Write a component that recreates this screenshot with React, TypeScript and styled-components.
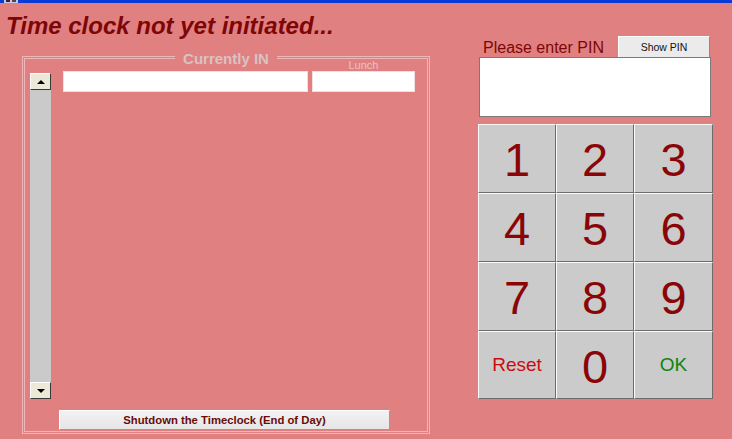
import React from "react";
import styled, { createGlobalStyle } from "styled-components";

const Global = createGlobalStyle`
  html, body { margin: 0; padding: 0; background: #e08080; }
  body { font-family: "Liberation Sans", Arial, sans-serif; }
  * { box-sizing: border-box; }
`;

const Window = styled.div`
  width: 732px;
  height: 439px;
  background: #e08080;
  overflow: hidden;
  display: flex;
  flex-direction: column;
`;

const TitleStrip = styled.div`
  height: 3px;
  background: #0c3ad6;
  display: flex;
  align-items: flex-start;
  padding-left: 4px;
  flex: none;
`;

const Body = styled.div`
  display: flex;
  flex: 1;
`;

const LeftCol = styled.div`
  width: 478px;
  padding-left: 6px;
  display: flex;
  flex-direction: column;
`;

const Title = styled.h1`
  margin: 9px 0 0 0;
  font-size: 24px;
  line-height: 28px;
  font-weight: bold;
  font-style: italic;
  color: #7e0606;
  white-space: nowrap;
`;

const GroupBox = styled.div`
  position: relative;
  margin: 16px 0 0 16px;
  width: 408px;
  height: 378px;
  border: 3px double #eeb6b6;
  padding: 12px 0 0 5px;
  display: flex;
  flex-direction: column;
`;

const Legend = styled.span`
  position: absolute;
  top: -9px;
  left: 50%;
  transform: translateX(-50%);
  padding: 0 8px;
  background: #e08080;
  font-size: 15px;
  line-height: 18px;
  font-weight: bold;
  color: #d9c2c2;
  white-space: nowrap;
`;

const ListRow = styled.div`
  display: flex;
  gap: 12px;
  height: 339px;
`;

const ScrollBar = styled.div`
  margin-top: 2px;
  width: 21px;
  height: 326px;
  background: #cacaca;
  display: flex;
  flex-direction: column;
  justify-content: space-between;
`;

const ScrollButton = styled.div`
  height: 17px;
  background: #ece9d8;
  border-top: 1px solid #ffffff;
  border-left: 1px solid #ffffff;
  border-right: 1px solid #3a3a3a;
  border-bottom: 1px solid #3a3a3a;
  display: flex;
  align-items: center;
  justify-content: center;
`;

const Arrow = styled.span<{ $down?: boolean }>`
  width: 0;
  height: 0;
  border-left: 4px solid transparent;
  border-right: 4px solid transparent;
  ${(p) =>
    p.$down
      ? "border-top: 4px solid #000;"
      : "border-bottom: 4px solid #000;"}
`;

const Columns = styled.div`
  display: flex;
  gap: 4px;
  align-items: flex-start;
`;

const Field = styled.div<{ $w: number }>`
  position: relative;
  width: ${(p) => p.$w}px;
  height: 21px;
  background: #ffffff;
  border: 1px solid #f4dede;
`;

const ColLabel = styled.span`
  position: absolute;
  top: -13px;
  left: 0;
  right: 0;
  text-align: center;
  font-size: 11px;
  line-height: 12px;
  color: #e9c2c2;
`;

const ShutdownButton = styled.button`
  margin: 0 0 0 29px;
  width: 331px;
  height: 20px;
  padding: 0;
  background: linear-gradient(#f2f2f2, #e6e6e6);
  border-top: 1px solid #ffffff;
  border-left: 1px solid #ffffff;
  border-right: 1px solid #9a9a9a;
  border-bottom: 1px solid #9a9a9a;
  font-family: "Liberation Sans", Arial, sans-serif;
  font-size: 11.3px;
  font-weight: bold;
  color: #6a0a0a;
  text-align: center;
`;

const RightCol = styled.div`
  width: 236px;
  padding-top: 33px;
  display: flex;
  flex-direction: column;
`;

const PinHeader = styled.div`
  display: flex;
  align-items: flex-end;
  height: 21px;
`;

const PinLabel = styled.span`
  padding-left: 5px;
  font-size: 16px;
  line-height: 18px;
  color: #7e0606;
  white-space: nowrap;
`;

const ShowPinButton = styled.button`
  margin: 0 4px 0 auto;
  width: 92px;
  height: 21px;
  padding: 0;
  background: #ebebeb;
  border-top: 1px solid #ffffff;
  border-left: 1px solid #ffffff;
  border-right: 1px solid #8a8a8a;
  border-bottom: none;
  font-family: "Liberation Sans", Arial, sans-serif;
  font-size: 10.5px;
  color: #111;
`;

const PinBox = styled.div`
  margin-left: 1px;
  width: 232px;
  height: 60px;
  background: #ffffff;
  border: 1px solid #7a7a7a;
`;

const Keypad = styled.div`
  margin-top: 7px;
  width: 235px;
  height: 275px;
  display: grid;
  grid-template-columns: 78px 78px 79px;
  grid-template-rows: 69px 69px 69px 68px;
`;

const Key = styled.button<{ $kind?: "digit" | "reset" | "ok" }>`
  margin: 0;
  padding: 0;
  background: #cbcbcb;
  border-top: 1px solid #fafafa;
  border-left: 1px solid #fafafa;
  border-right: 1px solid #6c6c6c;
  border-bottom: 1px solid #6c6c6c;
  font-family: "Liberation Sans", Arial, sans-serif;
  display: flex;
  align-items: center;
  justify-content: center;
  padding-top: ${(p) => (p.$kind === "digit" ? "2px" : "0")};
  font-size: ${(p) => (p.$kind === "digit" ? "47px" : "19px")};
  color: ${(p) =>
    p.$kind === "reset" ? "#cc0c0c" : p.$kind === "ok" ? "#0a860a" : "#8a0606"};
`;

const keys: { label: string; kind: "digit" | "reset" | "ok" }[] = [
  { label: "1", kind: "digit" },
  { label: "2", kind: "digit" },
  { label: "3", kind: "digit" },
  { label: "4", kind: "digit" },
  { label: "5", kind: "digit" },
  { label: "6", kind: "digit" },
  { label: "7", kind: "digit" },
  { label: "8", kind: "digit" },
  { label: "9", kind: "digit" },
  { label: "Reset", kind: "reset" },
  { label: "0", kind: "digit" },
  { label: "OK", kind: "ok" },
];

export default function App() {
  return (
    <Window>
      <Global />
      <TitleStrip>
        <svg width="14" height="3" viewBox="0 0 14 3">
          <rect x="0" y="0" width="14" height="3" fill="#c8c8e8" />
          <rect x="2" y="0" width="4" height="2" fill="#402020" />
          <rect x="8" y="0" width="4" height="2" fill="#604040" />
        </svg>
      </TitleStrip>
      <Body>
        <LeftCol>
          <Title>Time clock not yet initiated...</Title>
          <GroupBox>
            <Legend>Currently IN</Legend>
            <ListRow>
              <ScrollBar>
                <ScrollButton>
                  <Arrow />
                </ScrollButton>
                <ScrollButton>
                  <Arrow $down />
                </ScrollButton>
              </ScrollBar>
              <Columns>
                <Field $w={245} />
                <Field $w={103}>
                  <ColLabel>Lunch</ColLabel>
                </Field>
              </Columns>
            </ListRow>
            <ShutdownButton>Shutdown the Timeclock (End of Day)</ShutdownButton>
          </GroupBox>
        </LeftCol>
        <RightCol>
          <PinHeader>
            <PinLabel>Please enter PIN</PinLabel>
            <ShowPinButton>Show PIN</ShowPinButton>
          </PinHeader>
          <PinBox />
          <Keypad>
            {keys.map((k) => (
              <Key key={k.label} $kind={k.kind}>
                {k.label}
              </Key>
            ))}
          </Keypad>
        </RightCol>
      </Body>
    </Window>
  );
}
